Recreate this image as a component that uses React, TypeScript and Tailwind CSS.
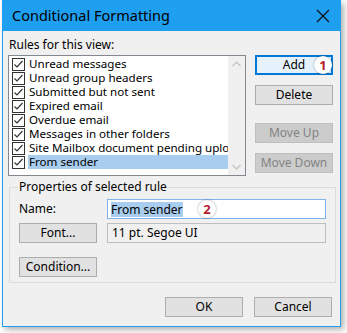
import type { ReactNode } from 'react';

const rules = [
  'Unread messages',
  'Unread group headers',
  'Submitted but not sent',
  'Expired email',
  'Overdue email',
  'Messages in other folders',
  'Site Mailbox document pending upload',
  'From sender',
];

const font = { fontFamily: '"Noto Sans", "Open Sans", sans-serif' };

function CheckBox() {
  return (
    <span className="flex h-[13px] w-[13px] shrink-0 items-center justify-center border border-[#333333] bg-white">
      <svg width="11" height="11" viewBox="0 0 11 11">
        <path d="M1.5 5.5 L4 8 L9.5 2" fill="none" stroke="#333333" strokeWidth="1.2" />
      </svg>
    </span>
  );
}

function Badge({ n }: { n: string }) {
  return (
    <span className="flex h-[18px] w-[18px] items-center justify-center rounded-full bg-white text-[13px] font-bold leading-none text-[#b3202a] shadow-[0_0_2px_rgba(0,0,0,0.45)]">
      {n}
    </span>
  );
}

function Btn({
  children,
  className = '',
  disabled = false,
  focused = false,
}: {
  children: ReactNode;
  className?: string;
  disabled?: boolean;
  focused?: boolean;
}) {
  let look = 'border border-[#adadad] bg-[#e1e1e1] text-black';
  if (disabled) look = 'border border-[#bfbfbf] bg-[#cccccc] text-[#838383]';
  if (focused) look = 'border-2 border-[#0078d7] bg-[#e5f1fb] text-black';
  return (
    <div
      className={`flex h-[20px] w-[78px] items-center justify-center text-[12px] leading-[16px] ${look} ${className}`}
    >
      {children}
    </div>
  );
}

export default function App() {
  return (
    <div className="h-[333px] w-[347px] bg-white" style={font}>
      <div className="ml-[2px] flex h-[327px] w-[339px] flex-col border border-t-0 border-[#1e9ff0] bg-[#f0f0f0] shadow-[3px_3px_6px_rgba(0,0,0,0.3)]">
        <div className="-mx-px flex h-[31px] shrink-0 items-center justify-between bg-[#1e9ff0] pl-[10px] pr-[11px]">
          <span className="text-[14.5px] text-black">Conditional Formatting</span>
          <svg width="14" height="14" viewBox="0 0 14 14">
            <path d="M1 1 L13 13 M13 1 L1 13" stroke="#111111" strokeWidth="1.2" />
          </svg>
        </div>

        <div className="flex flex-col px-[5px] pt-[6px]">
          <div className="h-[16px] pl-[1px] text-[12px] leading-[16px] text-black">
            Rules for this view:
          </div>

          <div className="mt-[2px] flex">
            <div className="flex h-[121px] w-[238px] border border-[#828790] bg-white">
              <div className="flex w-[219px] flex-col overflow-hidden pl-[3px] pt-px">
                {rules.map((r, i) => (
                  <div key={r} className="flex h-[14px] items-center gap-[3px]">
                    <CheckBox />
                    <span
                      className={`flex h-[14px] flex-1 items-center whitespace-nowrap pl-px text-[11.6px] leading-[14px] text-black ${
                        i === rules.length - 1 ? 'bg-[#a8cdef]' : ''
                      }`}
                    >
                      {r}
                    </span>
                  </div>
                ))}
              </div>
              <div className="flex w-[17px] flex-col items-center justify-between bg-[#f0f0f0] py-[5px]">
                <svg width="9" height="6" viewBox="0 0 9 6">
                  <path d="M0.5 5 L4.5 1 L8.5 5" fill="none" stroke="#c0c0c0" strokeWidth="1.2" />
                </svg>
                <svg width="9" height="6" viewBox="0 0 9 6">
                  <path d="M0.5 1 L4.5 5 L8.5 1" fill="none" stroke="#c0c0c0" strokeWidth="1.2" />
                </svg>
              </div>
            </div>

            <div className="ml-[9px] flex flex-col">
              <div className="relative">
                <Btn focused>Add</Btn>
                <div className="absolute right-[1px] top-px">
                  <Badge n="1" />
                </div>
              </div>
              <Btn className="mt-[10px]">Delete</Btn>
              <Btn className="mt-[18px]" disabled>
                Move Up
              </Btn>
              <Btn className="mt-[10px]" disabled>
                Move Down
              </Btn>
            </div>
          </div>

          <fieldset className="ml-px mt-[3px] h-[104px] w-[325px] border border-[#dcdcdc] px-[9px]">
            <legend className="ml-[-1px] px-px text-[12px] leading-[16px] text-black">
              Properties of selected rule
            </legend>
            <div className="mt-[4px] flex items-center">
              <span className="w-[88px] text-[12px] text-black">Name:</span>
              <div className="relative flex h-[20px] w-[219px] items-center border border-[#7eb4ea] bg-white pl-[3px]">
                <span className="bg-[#a8cdef] text-[12px] leading-[15px] text-black">From sender</span>
                <div className="absolute left-[90px] top-0">
                  <Badge n="2" />
                </div>
              </div>
            </div>
            <div className="mt-[4px] flex items-center">
              <Btn>Font...</Btn>
              <div className="ml-[10px] flex h-[20px] w-[219px] items-center border border-[#bfbfbf] bg-[#f0f0f0] pl-[4px] text-[12px] text-black">
                11 pt. Segoe UI
              </div>
            </div>
            <Btn className="mt-[14px]">Condition...</Btn>
          </fieldset>

          <div className="mt-[14px] flex justify-end gap-[11px] pr-[3px]">
            <Btn className="w-[73px]">OK</Btn>
            <Btn className="w-[73px]">Cancel</Btn>
          </div>
        </div>
      </div>
    </div>
  );
}
